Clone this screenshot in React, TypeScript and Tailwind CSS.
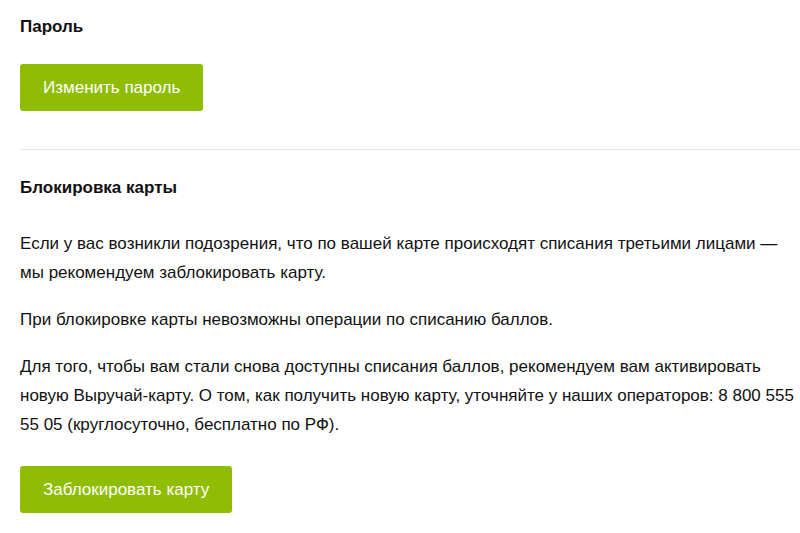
const sans = "font-['Liberation_Sans',Arial,sans-serif]";

const GreenButton = ({ children }: { children: React.ReactNode }) => (
  <button className="h-[47px] px-[23px] rounded-[3px] bg-[#8fbd03] text-white text-[17px] leading-none">
    {children}
  </button>
);

const App = () => {
  return (
    <div className={`${sans} bg-white min-h-[533px] text-[#111] pl-5 pt-4`}>
      <section>
        <h2 className="text-[17px] font-bold leading-[22px] mb-[26px]">Пароль</h2>
        <GreenButton>Изменить пароль</GreenButton>
      </section>

      <hr className="mt-[38px] border-t border-[#e6e6ec]" />

      <section className="pt-[27px]">
        <h2 className="text-[17px] font-bold leading-[22px] mb-[30px]">Блокировка карты</h2>
        <div className="text-[17px] leading-[29px] pr-1 space-y-[18px]">
          <p>
            Если у вас возникли подозрения, что по вашей карте происходят списания третьими лицами —
            мы рекомендуем заблокировать карту.
          </p>
          <p>При блокировке карты невозможны операции по списанию баллов.</p>
          <p>
            Для того, чтобы вам стали снова доступны списания баллов, рекомендуем вам активировать
            новую Выручай-карту. О том, как получить новую карту, уточняйте у наших операторов: 8 800 555
            55 05 (круглосуточно, бесплатно по РФ).
          </p>
        </div>
        <div className="mt-[27px]">
          <GreenButton>Заблокировать карту</GreenButton>
        </div>
      </section>
    </div>
  );
};

export default App;
